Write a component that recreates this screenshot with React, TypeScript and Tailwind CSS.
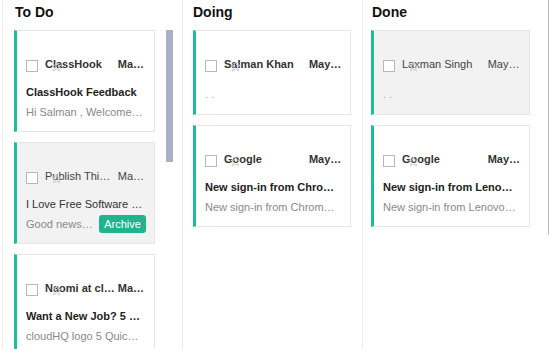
import React from "react";

type Mail = {
  from: string;
  date: string;
  subject?: string;
  snippet: string;
  read?: boolean;
  archive?: boolean;
};

const todo: Mail[] = [
  { from: "ClassHook", date: "Ma…", subject: "ClassHook Feedback", snippet: "Hi Salman , Welcome…" },
  {
    from: "Publish Thi…",
    date: "Ma…",
    subject: "I Love Free Software …",
    snippet: "Good news…",
    read: true,
    archive: true,
  },
  { from: "Naomi at cl…", date: "Ma…", subject: "Want a New Job? 5 …", snippet: "cloudHQ logo 5 Quic…" },
];

const doing: Mail[] = [
  { from: "Salman Khan", date: "May…", snippet: ". ." },
  { from: "Google", date: "May…", subject: "New sign-in from Chro…", snippet: "New sign-in from Chrom…" },
];

const done: Mail[] = [
  { from: "Laxman Singh", date: "May…", snippet: ". .", read: true },
  { from: "Google", date: "May…", subject: "New sign-in from Leno…", snippet: "New sign-in from Lenovo…" },
];

const Star = () => (
  <svg
    width="11"
    height="11"
    viewBox="0 0 24 24"
    fill="none"
    stroke="#c8c8c8"
    strokeWidth="2"
    className="absolute left-[25px] top-[7px]"
  >
    <polygon points="12 2 15 9 22 9.3 16.5 14 18.5 21.5 12 17.3 5.5 21.5 7.5 14 2 9.3 9 9" />
  </svg>
);

const Card = ({ mail, width }: { mail: Mail; width: string }) => {
  const weight = mail.read ? "font-normal text-[#444]" : "font-bold text-[#333]";
  return (
    <div
      className={`${width} border border-[#e6e6e6] border-l-[3px] border-l-[#1dbd9a] pl-[9px] pr-[8px] pt-[23px] ${
        mail.subject ? "pb-[9px]" : "pb-[10px]"
      } ${mail.read ? "bg-[#f2f2f2]" : "bg-white"}`}
    >
      <div className="relative flex h-[20px] items-center">
        <div className="mt-[3px] h-[12px] w-[12px] shrink-0 border border-[#b8b8b8] bg-white" />
        <Star />
        <div className="ml-[7px] flex min-w-0 flex-1">
          <div className={`w-[72%] shrink-0 overflow-hidden whitespace-nowrap ${weight}`}>{mail.from}</div>
          <div className={`min-w-0 flex-1 overflow-hidden whitespace-nowrap ${weight}`}>{mail.date}</div>
        </div>
      </div>
      {mail.subject && (
        <div
          className={`mt-[8px] h-[20px] overflow-hidden whitespace-nowrap leading-[20px] ${
            mail.read ? "font-normal text-[#333]" : "font-bold text-[#222]"
          }`}
        >
          {mail.subject}
        </div>
      )}
      <div
        className={`flex h-[20px] items-center justify-between ${mail.subject ? "" : "mt-[10px]"} ${
          mail.subject ? "text-[#8a8a8a]" : "text-[#aaa]"
        }`}
      >
        <span className="overflow-hidden whitespace-nowrap">{mail.snippet}</span>
        {mail.archive && (
          <button className="h-[18px] w-[47px] rounded-[3px] bg-[#1fb38e] text-[11px] text-white">Archive</button>
        )}
      </div>
    </div>
  );
};

const Heading = ({ title }: { title: string }) => (
  <div className="mb-[8px] pt-[2px] text-[14px] font-bold leading-[20px] text-[#111]">{title}</div>
);

export default function App() {
  return (
    <div
      className="flex h-[349px] w-[549px] overflow-hidden bg-white text-[11px]"
      style={{ fontFamily: "'Liberation Sans', Arial, sans-serif" }}
    >
      <div className="ml-[2px] w-[181px] shrink-0 border-x border-[#ececec] pl-[11px] pr-[9px]">
        <div className="pl-[1px]">
          <Heading title="To Do" />
        </div>
        <div className="flex">
          <div className="flex w-[141px] flex-col gap-[10px]">
            {todo.map((m, i) => (
              <Card key={i} mail={m} width="w-[141px]" />
            ))}
          </div>
          <div className="ml-[11px] w-[7px]">
            <div className="h-[132px] w-[7px] bg-[#a9b1c6]" />
          </div>
        </div>
      </div>
      <div className="w-[180px] shrink-0 border-r border-[#ececec] pl-[10px] pr-[11px]">
        <Heading title="Doing" />
        <div className="flex flex-col gap-[10px]">
          {doing.map((m, i) => (
            <Card key={i} mail={m} width="w-[158px]" />
          ))}
        </div>
      </div>
      <div className="flex flex-1">
        <div className="w-[185px] shrink-0 pl-[8px]">
          <div className="pl-[1px]">
            <Heading title="Done" />
          </div>
          <div className="flex flex-col gap-[10px]">
            {done.map((m, i) => (
              <Card key={i} mail={m} width="w-[159px]" />
            ))}
          </div>
        </div>
        <div className="h-[235px] w-[1px] shrink-0 bg-[#bbbbbb]" />
      </div>
    </div>
  );
}
